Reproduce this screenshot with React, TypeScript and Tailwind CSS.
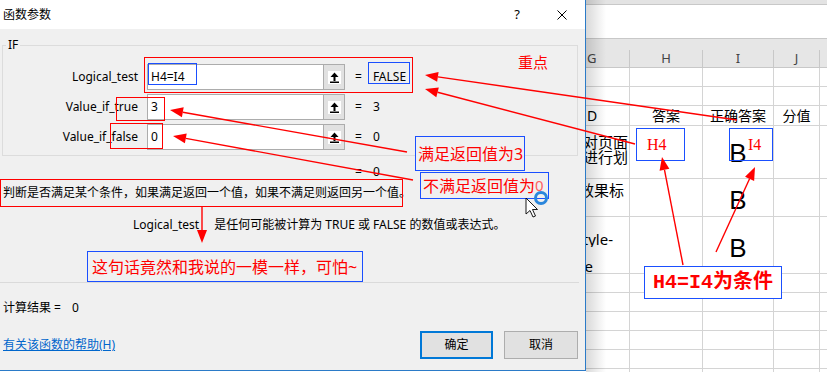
import React from 'react';

const RED = '#ff0000';

type Arrow = [number, number, number, number];

// from -> tip
const arrows: Arrow[] = [
  [737, 120, 425, 75],
  [635, 144, 425, 89],
  [407, 152, 170, 110],
  [413, 180, 173, 136],
  [202, 207, 202, 243],
  [683, 265, 662, 157],
  [716, 252, 755, 167],
];

const ArrowLine: React.FC<{ a: Arrow }> = ({ a }) => {
  const [x1, y1, x2, y2] = a;
  const len = Math.hypot(x2 - x1, y2 - y1);
  const ux = (x2 - x1) / len;
  const uy = (y2 - y1) / len;
  const bx = x2 - ux * 13;
  const by = y2 - uy * 13;
  const pts = `${x2},${y2} ${bx - uy * 5},${by + ux * 5} ${bx + uy * 5},${by - ux * 5}`;
  return (
    <g>
      <line x1={x1} y1={y1} x2={bx} y2={by} stroke={RED} strokeWidth={1.4} />
      <polygon points={pts} fill={RED} />
    </g>
  );
};

const RefButton = () => (
  <div className="flex w-[21px] items-center justify-center border-l border-[#adadad] bg-[#e1e1e1]">
    <svg width="13" height="13" viewBox="0 0 13 13">
      <rect width="13" height="13" fill="#fff" />
      <polygon points="6.5,1.5 2.5,6 10.5,6" fill="#000" />
      <rect x="5.5" y="5.5" width="2" height="4.5" fill="#000" />
      <rect x="2" y="10.5" width="9" height="1.5" fill="#000" />
    </svg>
  </div>
);

const ArgRow: React.FC<{ label: string; value: string; result: string }> = ({ label, value, result }) => (
  <div className="flex h-[26px] items-center">
    <div className="w-[135px] text-right">{label}</div>
    <div className="ml-[9px] flex h-[26px] w-[198px] border border-[#acacac] bg-white">
      <div className="flex flex-1 items-center pl-[3px]">{value}</div>
      <RefButton />
    </div>
    <span className="ml-[10px]">=</span>
    <span className="ml-[11px]">{result}</span>
  </div>
);

const rowHeights = [19, 19, 20, 53, 38, 57, 19, 19, 19, 19, 19, 19];

const GLine: React.FC<{ text: string; pr: number; mt?: string }> = ({ text, pr, mt = '' }) => (
  <div className={`flex justify-end overflow-hidden whitespace-nowrap leading-[15px] ${mt}`} style={{ paddingRight: pr }}>
    <span className="shrink-0">{text}</span>
  </div>
);

const Sheet = () => (
  <div className="relative flex flex-1 flex-col font-['Noto_Sans','Noto_Sans_CJK_SC',sans-serif] text-[14px] text-black">
    <div className="h-[5px] shrink-0 border-b border-[#c8c8c8] bg-[#e3e3e3]" />
    <div className="h-[34px] shrink-0 border-b border-[#c8c8c8] bg-white" />
    <div className="h-[11px] shrink-0 bg-[#e6e6e6]" />
    <div className="flex h-[18px] shrink-0 border-b border-[#c8c8c8] bg-[#e6e6e6] text-[13px] leading-[17px] text-[#444]">
      <div className="w-[44px] border-r border-[#c8c8c8] pl-[1px]">G</div>
      <div className="w-[73px] border-r border-[#c8c8c8] text-center">H</div>
      <div className="w-[71px] border-r border-[#c8c8c8] text-center">I</div>
      <div className="w-[46px] border-r border-[#c8c8c8] text-center">J</div>
      <div className="flex-1" />
    </div>
    {rowHeights.map((h, i) => (
      <div key={i} className="flex shrink-0 border-b border-[#d4d4d4]" style={{ height: h }}>
        <div className="w-[44px] overflow-hidden border-r border-[#d4d4d4] text-[15px]">
          {i === 2 && <div className="pl-[1px] text-[14px] leading-[19px]">D</div>}
          {i === 3 && (
            <div className="pt-[9px]">
              <GLine text="针对页面" pr={1} />
              <GLine text="并进行划" pr={1} />
            </div>
            )}
          {i === 4 && (
            <div className="pt-[4px]">
              <GLine text="好效果标" pr={5} />
            </div>
          )}
          {i === 5 && (
            <div className="pt-[15px]">
              <GLine text="style-" pr={16} />
              <GLine text="de" pr={36} mt="mt-[12px]" />
            </div>
          )}
        </div>
        <div className="flex w-[73px] items-center justify-center border-r border-[#d4d4d4]">{i === 2 && '答案'}</div>
        <div className="flex w-[71px] items-center justify-center border-r border-[#d4d4d4] font-['Liberation_Sans','Noto_Sans_CJK_SC',sans-serif]">
          {i === 2 && <span className="font-['Noto_Sans_CJK_SC',sans-serif] text-[14px]">正确答案</span>}
          {(i === 3 || i === 4 || i === 5) && (
            <span className={`text-[26px] leading-none ${i === 3 ? 'pt-[2px]' : i === 4 ? 'pt-[4px]' : 'pt-[6px]'}`}>B</span>
          )}
        </div>
        <div className="flex w-[46px] items-center justify-center border-r border-[#d4d4d4]">{i === 2 && '分值'}</div>
        <div className="flex-1" />
      </div>
    ))}
    <div className="pointer-events-none absolute inset-y-0 left-0 w-[20px] bg-linear-to-r from-black/15 to-transparent" />
  </div>
);

export default function App() {
  return (
    <div className="relative flex h-[372px] w-[827px] overflow-hidden bg-white font-['Noto_Sans','Noto_Sans_CJK_SC',sans-serif] text-[12px] text-black">
      {/* dialog */}
      <div className="relative z-10 flex h-[371px] w-[586px] shrink-0 flex-col border-r border-b border-[#2b7bc8] bg-[#f0f0f0]">
        <div className="flex h-[29px] shrink-0 items-center bg-white pl-[3px]">
          <span>函数参数</span>
          <span className="ml-auto text-[13px]">?</span>
          <svg className="ml-[37px] mr-[18px]" width="10" height="10" viewBox="0 0 10 10">
            <path d="M0.5 0.5 L9.5 9.5 M9.5 0.5 L0.5 9.5" stroke="#000" strokeWidth="1" />
          </svg>
        </div>

        <div className="relative ml-[2px] mt-[16px] flex w-[576px] flex-col gap-[4px] border border-[#dcdcdc] pt-[18px] pb-[5px]">
          <span className="absolute -top-[9px] left-[3px] bg-[#f0f0f0] px-[2px] leading-[16px]">IF</span>
          <ArgRow label="Logical_test" value="H4=I4" result="FALSE" />
          <ArgRow label="Value_if_true" value="3" result="3" />
          <ArgRow label="Value_if_false" value="0" result="0" />
        </div>

        <div className="mt-[8px] flex h-[16px] items-center pl-[355px]">
          <span>=</span>
          <span className="ml-[11px]">0</span>
        </div>
        <div className="mt-[5px] h-[16px] whitespace-nowrap pl-[3px] leading-[16px]">
          判断是否满足某个条件，如果满足返回一个值，如果不满足则返回另一个值。
        </div>
        <div className="mt-[16px] flex h-[16px] items-center pl-[133px] whitespace-nowrap">
          <span>Logical_test</span>
          <span className="ml-[15px]">是任何可能被计算为 TRUE 或 FALSE 的数值或表达式。</span>
        </div>
        <div className="mt-[49px] h-px w-[579px] bg-[#dadada]" />
        <div className="mt-[17px] flex h-[16px] items-center pl-[3px]">
          <span>计算结果 =</span>
          <span className="ml-[11px]">0</span>
        </div>
        <div className="mt-[15px] flex h-[28px] items-center pl-[3px] pr-[7px]">
          <a className="text-[#0066cc] underline">有关该函数的帮助(H)</a>
          <button className="ml-auto h-[28px] w-[73px] border-2 border-[#0078d7] bg-[#e1e1e1]">确定</button>
          <button className="ml-[11px] h-[28px] w-[74px] border border-[#adadad] bg-[#e1e1e1]">取消</button>
        </div>
      </div>

      <Sheet />

      {/* annotations */}
      <div className="pointer-events-none absolute inset-0 z-20">
        <div className="absolute left-[144px] top-[57px] h-[36px] w-[269px] border border-[#ff0000]" />
        <div className="absolute left-[148px] top-[63px] h-[22px] w-[49px] border border-[#1a4fff]" />
        <div className="absolute left-[368px] top-[62px] h-[22px] w-[42px] border border-[#1a4fff]" />
        <div className="absolute left-[518px] top-[53px] text-[15px] leading-[18px] text-[#ff0000]">重点</div>
        <div className="absolute left-[116px] top-[97px] h-[24px] w-[49px] border border-[#ff0000]" />
        <div className="absolute left-[110px] top-[123px] h-[26px] w-[53px] border border-[#ff0000]" />
        <div className="absolute left-0 top-[179px] h-[28px] w-[403px] border border-[#ff0000]" />

        <div className="absolute left-[415px] top-[136px] flex h-[35px] w-[110px] items-center border border-[#1a4fff] bg-[#f0f0f0] pl-[2px] text-[16px] text-[#ff0000]">
          满足返回值为3
        </div>
        <div className="absolute left-[420px] top-[172px] flex h-[27px] w-[129px] items-center border border-[#1a4fff] bg-[#f0f0f0] pl-[2px] text-[16px] text-[#ff0000]">
          不满足返回值为<span className="text-[15px] text-[#ff6060]">0</span>
        </div>
        <div className="absolute left-[87px] top-[251px] flex h-[31px] w-[276px] items-center border border-[#1a4fff] bg-[#f0f0f0] pl-[4px] text-[16px] whitespace-nowrap text-[#ff0000]">
          这句话竟然和我说的一模一样，可怕~
        </div>

        <div className="absolute left-[636px] top-[128px] flex h-[33px] w-[49px] items-center border border-[#1a4fff] bg-white pl-[10px] font-['Liberation_Serif',serif] text-[16px] text-[#ff0000]">
          H4
        </div>
        <div className="absolute left-[729px] top-[128px] flex h-[33px] w-[44px] items-center border border-[#1a4fff] pl-[18px] font-['Liberation_Serif',serif] text-[16px] text-[#ff0000]">
          I4
        </div>
        <div className="absolute left-[644px] top-[266px] flex h-[33px] w-[138px] items-center justify-center border border-[#1a4fff] bg-white font-['Liberation_Mono','Noto_Sans_CJK_SC',monospace] text-[20px] font-semibold text-[#ff0000]">
          H4=I4为条件
        </div>

        <svg className="absolute left-0 top-0" width="827" height="372">
          {arrows.map((a, i) => (
            <ArrowLine key={i} a={a} />
          ))}
          <circle cx="541" cy="198" r="5.5" fill="none" stroke="#2a86dc" strokeWidth="3" />
          <path d="M526 198 L526 214 L530 210.5 L533 217 L535.5 216 L532.5 209.5 L537.5 209.5 Z" fill="#fff" stroke="#000" strokeWidth="0.9" />
        </svg>
      </div>
    </div>
  );
}
